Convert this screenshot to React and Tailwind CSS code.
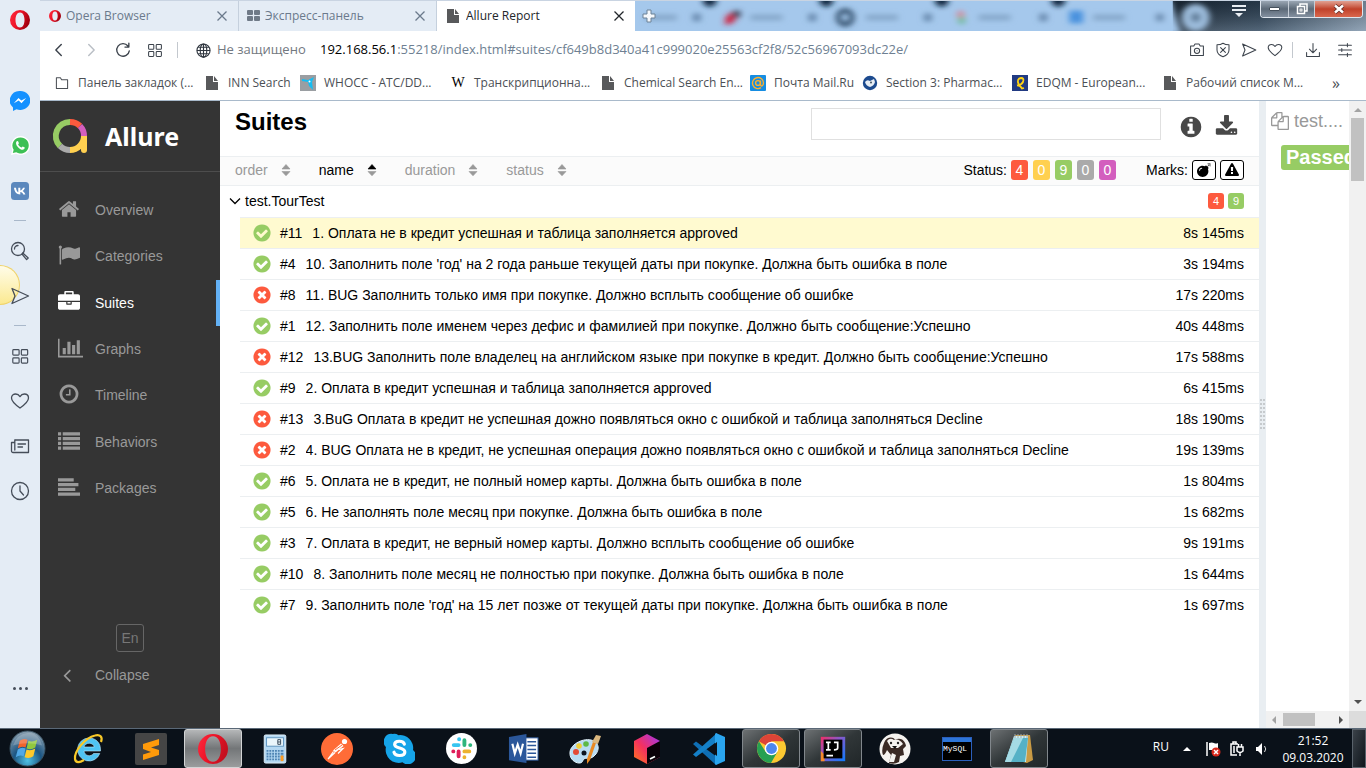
import { FaBomb } from "react-icons/fa";

const DISC = "q0 209-103 385.5t-279.5 279.5-385.5 103-385.5-103-279.5-279.5-103-385.5 103-385.5 279.5-279.5 385.5-103 385.5 103 279.5 279.5 103 385.5z";

const GLYPHS = {
  check: "M1412 734q0-28-18-46l-91-90q-19-19-45-19t-45 19l-408 407-226-226q-19-19-45-19t-45 19l-91 90q-18 18-18 46 0 27 18 45l362 362q19 19 45 19 27 0 46-19l543-543q18-18 18-45zm252 162" + DISC,
  times: "M1277 1122q0-26-19-45l-181-181 181-181q19-19 19-45 0-27-19-46l-90-90q-19-19-46-19-26 0-45 19l-181 181-181-181q-19-19-45-19-27 0-46 19l-90 90q-19 19-19 46 0 26 19 45l181 181-181 181q-19 19-19 45 0 27 19 46l90 90q19 19 46 19 26 0 45-19l181-181 181 181q19 19 45 19 27 0 46-19l90-90q19-19 19-46zm387-226" + DISC,
  info: "M1152 1376v-160q0-14-9-23t-23-9h-96v-512q0-14-9-23t-23-9h-320q-14 0-23 9t-9 23v160q0 14 9 23t23 9h96v320h-96q-14 0-23 9t-9 23v160q0 14 9 23t23 9h448q14 0 23-9t9-23zm-128-896v-160q0-14-9-23t-23-9h-192q-14 0-23 9t-9 23v160q0 14 9 23t23 9h192q14 0 23-9t9-23zm640 416" + DISC,
  home: "M1472 992v480q0 26-19 45t-45 19h-384v-384h-256v384h-384q-26 0-45-19t-19-45v-480q0-1 .5-3t.5-3l575-474 575 474q1 2 1 6zm223-69l-62 74q-8 9-21 11h-3q-13 0-21-7l-692-577-692 577q-12 8-24 7-13-2-21-11l-62-74q-8-10-7-23.5t11-21.5l719-599q32-26 76-26t76 26l244 204v-195q0-14 9-23t23-9h192q14 0 23 9t9 23v408l219 182q10 8 11 21.5t-7 23.5z",
  flag: "M320 256q0 72-64 110v1266q0 13-9.5 22.5t-22.5 9.5h-64q-13 0-22.5-9.5t-9.5-22.5v-1266q-64-38-64-110 0-53 37.5-90.5t90.5-37.5 90.5 37.5 37.5 90.5zm1472 64v763q0 25-12.5 38.5t-39.5 27.5q-215 116-369 116-61 0-123.5-22t-108.5-48-115.5-48-142.5-22q-192 0-464 146-17 9-33 9-26 0-45-19t-19-45v-742q0-32 31-55 21-14 79-43 236-120 421-120 107 0 200 29t219 88q38 19 88 19 54 0 117.5-21t110-47 88-47 54.5-21q26 0 45 19t19 45z",
  briefcase: "M640 256h512v-128h-512v128zm1152 640v480q0 66-47 113t-113 47h-1472q-66 0-113-47t-47-113v-480h672v160q0 26 19 45t45 19h320q26 0 45-19t19-45v-160h672zm-768 0v128h-256v-128h256zm768-480v384h-1792v-384q0-66 47-113t113-47h352v-160q0-40 28-68t68-28h576q40 0 68 28t28 68v160h352q66 0 113 47t47 113z",
  chart: "M640 896v512h-256v-512h256zm384-512v1024h-256v-1024h256zm1024 1152v128h-2048v-1536h128v1408h1920zm-640-896v768h-256v-768h256zm384-384v1152h-256v-1152h256z",
  clock: "M1024 544v448q0 14-9 23t-23 9h-320q-14 0-23-9t-9-23v-64q0-14 9-23t23-9h224v-352q0-14 9-23t23-9h64q14 0 23 9t9 23zm416 352q0-148-73-273t-198-198-273-73-273 73-198 198-73 273 73 273 198 198 273 73 273-73 198-198 73-273zm224 0" + DISC,
  list: "M0 192h256v256h-256zM0 576h256v256h-256zM0 960h256v256h-256zM0 1344h256v256h-256zM384 192h1408v256h-1408zM384 576h1408v256h-1408zM384 960h1408v256h-1408zM384 1344h1408v256h-1408z",
  align: "M0 192h1280v256h-1280zM0 576h1664v256h-1664zM0 960h1408v256h-1408zM0 1344h1792v256h-1792z",
  download: "M1344 1344q0-26-19-45t-45-19-45 19-19 45 19 45 45 19 45-19 19-45zm256 0q0-26-19-45t-45-19-45 19-19 45 19 45 45 19 45-19 19-45zm128-224v320q0 40-28 68t-68 28h-1472q-40 0-68-28t-28-68v-320q0-40 28-68t68-28h465l135 136q58 56 136 56t136-56l136-136h464q40 0 68 28t28 68zm-325-569q17 41-14 70l-448 448q-18 19-45 19t-45-19l-448-448q-31-29-14-70 17-39 59-39h256v-448q0-26 19-45t45-19h256q26 0 45 19t19 45v448h256q42 0 59 39z",
  left: "M1203 544q0 13-10 23l-393 393 393 393q10 10 10 23t-10 23l-50 50q-10 10-23 10t-23-10l-466-466q-10-10-10-23t10-23l466-466q10-10 23-10t23 10l50 50q10 10 10 23z",
  files: "M1696 384q40 0 68 28t28 68v1216q0 40-28 68t-68 28h-960q-40 0-68-28t-28-68v-288h-544q-40 0-68-28t-28-68v-672q0-40 20-88t48-76l408-408q28-28 76-48t88-20h416q40 0 68 28t28 68v328q68-40 128-40h416zm-544 213l-299 299h299v-299zm-640-384l-299 299h299v-299zm196 647l316-316v-416h-384v416q0 40-28 68t-68 28h-416v640h512v-256q0-40 20-88t48-76zm956 804v-1152h-384v416q0 40-28 68t-68 28h-416v640h896z",
  warning: "M1024 1375v-190q0-14-9.5-23.5t-22.5-9.5h-192q-13 0-22.5 9.5t-9.5 23.5v190q0 14 9.5 23.5t22.5 9.5h192q13 0 22.5-9.5t9.5-23.5zm-2-374l18-459q0-12-10-19-13-11-24-11h-220q-11 0-24 11-10 7-10 21l17 457q0 10 10 16.5t24 6.5h185q14 0 23.5-6.5t10.5-16.5zm-14-934l768 1408q35 63-2 126-17 29-46.5 46t-63.5 17h-1536q-34 0-63.5-17t-46.5-46q-37-63-2-126l768-1408q17-31 47-49t65-18 65 18 47 49z",
};

function Glyph({ name, className = "", wide = false }) {
  return (
    <svg viewBox={wide ? "0 0 2048 1792" : "0 0 1792 1792"} fill="currentColor" className={`shrink-0 ${className}`} aria-hidden="true">
      <path d={GLYPHS[name]} />
    </svg>
  );
}

function Line({ children, size = "size-5", w = 1.3 }) {
  return (
    <svg viewBox="0 0 20 20" fill="none" stroke="currentColor" strokeWidth={w} strokeLinejoin="round" strokeLinecap="round" className={`shrink-0 ${size}`} aria-hidden="true">
      {children}
    </svg>
  );
}

function OperaLogo({ id, className, bright = false }) {
  return (
    <svg viewBox="0 0 40 40" className={`shrink-0 ${className}`} aria-hidden="true">
      <defs>
        <linearGradient id={id} x1="0" y1="0" x2="1" y2="0.4">
          <stop offset="0" stopColor="#ff2b3f" />
          <stop offset="0.5" stopColor="#ee1428" />
          <stop offset="1" stopColor={bright ? "#c4101f" : "#a3000f"} />
        </linearGradient>
      </defs>
      <path
        fillRule="evenodd"
        fill={`url(#${id})`}
        d={bright
          ? "M20 0a20 20 0 1 0 0 40a20 20 0 1 0 0-40zM20 3c7 0 10.500 8 10.500 17s-3.500 17-10.500 17s-10.500-8-10.500-17s3.500-17 10.500-17z"
          : "M20 0a20 20 0 1 0 0 40a20 20 0 1 0 0-40zM20 5c6 0 9 7 9 15s-3 15-9 15s-9-7-9-15s3-15 9-15z"}
      />
    </svg>
  );
}

const FileIcon = () => (
  <svg viewBox="0 0 16 16" className="size-4 shrink-0" fill="#58595b" aria-hidden="true">
    <path d="M2 1h7v6h5v8H2zM10 1l4 5h-4z" />
  </svg>
);

const Cross = () => (
  <svg viewBox="0 0 12 12" className="size-3" stroke="currentColor" strokeWidth="1.300" aria-hidden="true">
    <path d="M1.500 1.500l9 9M10.500 1.500l-9 9" />
  </svg>
);

const HEART = "M10 17C5 13.500 1.500 10.500 1.500 7C1.500 4.500 3.500 3 5.700 3C7.500 3 9 4 10 5.600C11 4 12.500 3 14.300 3C16.500 3 18.500 4.500 18.500 7C18.500 10.500 15 13.500 10 17z";
const SEND = "M2 2.500L18.500 10L2 17.500L5 10z";

function OperaSidebar() {
  const item = "flex h-[45px] w-10 items-center justify-center";
  const dash = <div className="flex h-[15px] items-center"><div className="h-px w-3 bg-[#a9b8ca]" /></div>;
  return (
    <aside className="relative flex w-10 shrink-0 flex-col items-center bg-[#e4ecf5] text-[#454d59]">
      <div className="absolute top-[265px] left-0 h-10 w-5 rounded-r-full border border-l-0 border-[#f0d368] bg-linear-to-b from-[#fffce8] to-[#fbe98f]" />
      <button aria-label="Opera" className="mb-[38px] flex h-10 w-10 items-center justify-center"><OperaLogo id="op-a" className="size-5" /></button>
      <button aria-label="Messenger" className={item}>
        <svg viewBox="0 0 20 20" className="size-5"><path fill="#1591ff" d="M10 0a10 9.500 0 0 0-7 16.500V20l3.500-1.700A10 9.500 0 1 0 10 0z" /><path fill="#fff" d="M3.800 12.300L8.500 7l2.800 2.600L16.200 7l-4.700 5.200-2.800-2.600z" /></svg>
      </button>
      <button aria-label="WhatsApp" className={item}>
        <svg viewBox="0 0 20 20" className="size-[19px]"><path fill="#fff" d="M10 0a10 10 0 0 0-8.700 14.800L0 20l5.300-1.300A10 10 0 1 0 10 0z" /><path fill="#3dc055" d="M10 1.500a8.500 8.500 0 0 0-7.200 13L1.900 18l3.600-.9A8.500 8.500 0 1 0 10 1.500z" /><path fill="#fff" d="M7 5.300c.5 0 1.300 2 1.300 2.300 0 .4-.8 1.100-.8 1.300.2.600 2.300 2.900 3.500 3.200.3 0 1-1.100 1.300-1.100.4 0 2.300 1 2.300 1.200 0 1.300-1.300 2.200-2.400 2.200C9.500 14.400 5.300 10.500 5.300 7.500 5.300 6.300 6 5.300 7 5.300z" /></svg>
      </button>
      <button aria-label="VK" className={item}>
        <svg viewBox="0 0 18 18" className="size-[18px]"><rect width="18" height="18" rx="3.500" fill="#5b88bd" /><path fill="#fff" d="M9.300 12.500c-3.600 0-5.900-2.500-6.300-6.700h2c.2 2.500 1.300 4 2.300 4.400V5.800h2v2.700c1-.2 2.200-1.300 2.700-2.700h1.900c-.3 1.500-1.400 2.700-2.300 3.200.9.400 2.200 1.500 2.800 3.500h-2.100c-.5-1.300-1.600-2.300-3-2.400z" /></svg>
      </button>
      {dash}
      <button aria-label="Search" className={item}><Line><circle cx="8" cy="8" r="6.500" /><path d="M4.500 8A3.500 3.500 0 0 1 8 4.500M12.800 12l5.400 5-1.600 1.600-4.600-5.500z" /></Line></button>
      <button aria-label="My Flow" className={`relative ${item}`}><Line><path d={SEND} /></Line></button>
      {dash}
      <button aria-label="Speed Dial" className={item}><Line size="size-[18px]"><rect x="2" y="3" width="7" height="6" rx="1" /><rect x="11.500" y="3" width="7" height="6" rx="1" /><rect x="2" y="12" width="7" height="6" rx="1" /><rect x="11.500" y="12" width="7" height="6" rx="1" /></Line></button>
      <button aria-label="Bookmarks" className={item}><Line><path d={HEART} /></Line></button>
      <button aria-label="News" className={item}><Line><path d="M5 4h13.500v12.500H3a1.500 1.500 0 0 1-1.500-1.500V6.500H4M4.800 4v10M8 8h7.500M8 11h4.500" /></Line></button>
      <button aria-label="History" className={item}><Line><circle cx="10" cy="10" r="8.500" /><path d="M10 5v5l3.500 4" /></Line></button>
      <button aria-label="More" className="mt-auto mb-[30px] flex h-5 w-10 items-center justify-center gap-[3px]">
        <i className="size-[3px] rounded-full bg-[#454d59]" /><i className="size-[3px] rounded-full bg-[#454d59]" /><i className="size-[3px] rounded-full bg-[#454d59]" />
      </button>
    </aside>
  );
}

function Tab({ icon, label, active }) {
  return (
    <div className={`flex h-full w-[198px] shrink-0 items-center gap-[5px] pl-2 pr-[10px] ${active ? "bg-white text-[#22262b]" : "border-r border-[#c5d0dd] bg-[#e4ecf5] text-[#6b7a8c]"}`}>
      {icon}
      <a href="#tab" className="flex-1 truncate text-xs">{label}</a>
      <button aria-label="Close tab"><Cross /></button>
    </div>
  );
}

function AeroGlass() {
  return (
    <svg viewBox="0 0 734 31" preserveAspectRatio="none" className="absolute inset-0 h-full w-full" aria-hidden="true">
      <defs>
        <filter id="soft" x="-20%" y="-50%" width="140%" height="200%"><feGaussianBlur stdDeviation="3" /></filter>
        <linearGradient id="dark" x1="0" x2="1"><stop offset="0" stopColor="#1a2836" /><stop offset="0.45" stopColor="#2b3f52" /><stop offset="1" stopColor="#8093a6" /></linearGradient>
        <linearGradient id="shade" x1="0" x2="0" y1="0" y2="1"><stop offset="0" stopColor="#000" stopOpacity="0.150" /><stop offset="1" stopColor="#cde" stopOpacity="0.250" /></linearGradient>
      </defs>
      <rect width="734" height="31" fill="#a5c8ec" />
      <rect x="540" width="194" height="31" fill="url(#dark)" />
      <rect x="540" width="194" height="31" fill="url(#shade)" />
      <g filter="url(#soft)">
        <path d="M520 0h18q5 20 10 34h-28z" fill="#a5c8ec" />
        <circle cx="563" cy="17" r="14" fill="#9dbddd" /><circle cx="563" cy="17" r="5" fill="#5b7894" />
        {[75, 192, 308, 425].map((x) => <circle key={x} cx={x} cy="-1" r="7" fill="#10283f" />)}
        {[10, 116, 232, 345, 460].map((x) => <rect key={x} x={x} y="14" width="32" height="6" fill="#86a8ca" />)}
        {[62, 178, 294, 410, 527].map((x) => <rect key={x} x={x - 4} y="13" width="8" height="8" fill="#6789ad" />)}
        <path d="M90 24q0-13 11-12v8q-4 5-11 4z" fill="#cf2545" /><rect x="98" y="10" width="8" height="7" fill="#41465c" />
        <circle cx="211" cy="17" r="7" fill="none" stroke="#304e6b" strokeWidth="5" />
        <circle cx="327" cy="14" r="4" fill="#d58b9c" /><circle cx="328" cy="20" r="4" fill="#74bba0" />
        <rect x="436" y="10" width="14" height="13" fill="#4a92de" />
      </g>
    </svg>
  );
}

function TabBar() {
  return (
    <div className="flex h-[31px] shrink-0 border-t border-[#c9d4e2] bg-[#e4ecf5] pl-px">
      <Tab icon={<OperaLogo id="op-b" className="size-3" />} label="Opera Browser" />
      <Tab icon={<svg viewBox="0 0 13 12" className="h-3 w-[13px] shrink-0" fill="#6f7a87"><rect width="6" height="5" rx="1" /><rect x="7" width="6" height="5" rx="1" /><rect y="6" width="6" height="5" rx="1" /><rect x="7" y="6" width="6" height="5" rx="1" /></svg>} label="Экспресс-панель" />
      <Tab active icon={<FileIcon />} label="Allure Report" />
      <div className="relative flex min-w-0 flex-1 items-start justify-between overflow-hidden">
        <AeroGlass />
        <button aria-label="New tab" className="relative mt-2 ml-[7px]">
          <svg viewBox="0 0 14 14" className="size-[14px]"><path d="M5 1h4v4h4v4H9v4H5V9H1V5h4z" fill="#f5f8fb" stroke="#6d8297" /></svg>
        </button>
        <div className="relative flex items-start pr-[3px]">
          <button aria-label="Tab menu" className="mt-1 mr-[14px]">
            <svg viewBox="0 0 14 12" className="h-3 w-[14px]" fill="#e9eef3"><path d="M0 0h14v2H0zM0 4h14v2H0zM3 8h8l-4 4z" /></svg>
          </button>
          <div className="flex h-[17px] overflow-hidden rounded-b-[4px] border border-t-0 border-[#dfe6ee] text-white">
            <button aria-label="Minimize" className="flex w-7 items-center justify-center border-r border-[#c6ced7] bg-linear-to-b from-[#9aa6b3] via-[#5d6a78] to-[#8390a0]"><i className="h-1 w-[11px] rounded-[1px] border border-[#45505c] bg-white" /></button>
            <button aria-label="Restore" className="flex w-[26px] items-center justify-center border-r border-[#c6ced7] bg-linear-to-b from-[#9aa6b3] via-[#5d6a78] to-[#8390a0]">
              <svg viewBox="0 0 12 12" className="size-3" fill="none" stroke="#fff" strokeWidth="1.500"><path d="M4 3V1h7v7H9" /><rect x="1.500" y="3.500" width="7" height="7" /><rect x="4" y="6" width="2" height="2" strokeWidth="1" /></svg>
            </button>
            <button aria-label="Close" className="flex w-[47px] items-center justify-center bg-linear-to-b from-[#e0a091] via-[#c0412a] to-[#d9674d]">
              <svg viewBox="0 0 12 10" className="h-[10px] w-3"><path d="M2 1.500l8 7M10 1.500l-8 7" stroke="#5b2a25" strokeWidth="4" /><path d="M2 1.500l8 7M10 1.500l-8 7" stroke="#fff" strokeWidth="2.500" /></svg>
            </button>
          </div>
        </div>
      </div>
    </div>
  );
}

function AddressBar() {
  const nav = "flex h-8 w-8 items-center justify-center";
  const act = "flex h-8 w-[26px] items-center justify-center";
  return (
    <div className="flex h-[38px] shrink-0 items-center bg-white pl-[3px] pr-[5px] text-[#3c434c]">
      <button aria-label="Back" className={nav}><Line w={1.6} size="size-[18px]"><path d="M12.500 4L6.500 10l6 6" /></Line></button>
      <button aria-label="Forward" className={`${nav} text-[#b9bec5]`}><Line w={1.6} size="size-[18px]"><path d="M7.500 4l6 6-6 6" /></Line></button>
      <button aria-label="Reload" className={nav}><Line w={1.5} size="size-[18px]"><path d="M15.500 5.500A7 7 0 1 0 17 11M16.500 2.500v4.300h-4.300" /></Line></button>
      <button aria-label="Speed Dial" className={nav}><Line size="size-4"><rect x="2" y="3" width="6.500" height="6" rx="1" /><rect x="11.500" y="3" width="6.500" height="6" rx="1" /><rect x="2" y="12" width="6.500" height="6" rx="1" /><rect x="11.500" y="12" width="6.500" height="6" rx="1" /></Line></button>
      <div className="mx-[6px] h-4 w-px bg-[#c3c8ce]" />
      <div className="ml-3 flex w-[124px] shrink-0 items-center gap-[6px] text-[13px] text-[#72787f]">
        <svg viewBox="0 0 16 16" className="size-[15px] shrink-0" fill="none" stroke="#2f363f" strokeWidth="1.200"><circle cx="8" cy="8" r="7" /><ellipse cx="8" cy="8" rx="3.500" ry="7" /><path d="M1 8h14M8 1v14M2.300 4.500h11.400M2.300 11.500h11.400" /></svg>
        <span className="whitespace-nowrap">Не защищено</span>
      </div>
      <a href="#url" className="min-w-0 flex-1 truncate text-[13px] text-[#6e7f92]"><span className="text-black">192.168.56.1</span>:55218/index.html#suites/cf649b8d340a41c999020e25563cf2f8/52c56967093dc22e/</a>
      <button aria-label="Snapshot" className={act}><Line size="size-4"><path d="M2 5h4l1.500-2.500h5L14 5h4v12H2z" /><circle cx="10" cy="11" r="3.300" /><path d="M10 11h.1" /></Line></button>
      <button aria-label="Ad blocker" className={act}><Line size="size-4"><path d="M10 1.500C7 3.500 4.500 3.500 2.500 3.500V10c0 4.500 3.500 7 7.500 8.500 4-1.500 7.500-4 7.500-8.500V3.500c-2 0-4.500 0-7.500-2zM7 7l6 6M13 7l-6 6" /></Line></button>
      <button aria-label="Send" className={act}><Line size="size-4"><path d={SEND} /></Line></button>
      <button aria-label="Add bookmark" className={act}><Line size="size-4"><path d={HEART} /></Line></button>
      <div className="mx-1 h-4 w-px bg-[#c3c8ce]" />
      <button aria-label="Downloads" className={nav}><Line size="size-4"><path d="M10 2v11M5.500 9l4.500 4.500L14.500 9M2 13v5h16v-5" /></Line></button>
      <button aria-label="Easy setup" className={nav}><Line size="size-4"><path d="M2 4h16M2 10h16M2 16h16M13 2v4M6 8v4M13 14v4" /></Line></button>
    </div>
  );
}

const BOOKMARKS = [
  ["Панель закладок (...", "folder", "w-[150px]"],
  ["INN Search", "file", "w-[96px]"],
  ["WHOCC - ATC/DD...", "who", "w-[150px]"],
  ["Транскрипционна...", "wiki", "w-[150px]"],
  ["Chemical Search En...", "file", "w-[150px]"],
  ["Почта Mail.Ru", "mail", "w-[112px]"],
  ["Section 3: Pharmac...", "round", "w-[150px]"],
  ["EDQM - European...", "edqm", "w-[150px]"],
  ["Рабочий список М...", "file", "w-[150px]"],
];

const BOOKMARK_ICONS = {
  folder: <Line size="size-4"><path d="M3 3.500h5l1.500 2.500H17v11H3z" /></Line>,
  file: <FileIcon />,
  who: <svg viewBox="0 0 16 16" className="size-4 shrink-0"><rect width="16" height="16" fill="#9a9ea2" /><path d="M2 4l6 1 6-3-2 5 1 8-4-4-1-4-6-1z" fill="#16bdf2" /><circle cx="9.500" cy="6.500" r="1" fill="#fff" /></svg>,
  wiki: <span className="w-4 shrink-0 text-center font-['Liberation_Serif',serif] text-[14px] text-black">W</span>,
  mail: <svg viewBox="0 0 16 16" className="size-4 shrink-0"><rect width="16" height="16" rx="1" fill="#168de2" /><path d="M10.500 5.500v4c0 2.500 3 1.500 3-1.500a5.500 5.500 0 1 0-2.500 4.700" fill="none" stroke="#ffb02e" strokeWidth="1.400" /><circle cx="8" cy="8" r="2.400" fill="none" stroke="#ffb02e" strokeWidth="1.400" /></svg>,
  round: <svg viewBox="0 0 16 16" className="size-4 shrink-0"><circle cx="8" cy="8" r="7.200" fill="#1d4b8f" /><path d="M3 7q2-3 5-1l4-2 1 3q-1 4-5 5-4-1-5-5z" fill="#e8eef5" /><circle cx="9" cy="7.500" r="1" fill="#456" /></svg>,
  edqm: <svg viewBox="0 0 16 16" className="size-4 shrink-0"><rect width="16" height="16" fill="#213a82" /><path d="M6.500 9Q4.500 3.500 9 3q3.500 0 2 4-1.500 3-5 3M5 10.500q3-.5 5 3l2-.5" fill="none" stroke="#ffd313" strokeWidth="1.800" /></svg>,
};

function BookmarksBar() {
  return (
    <div className="flex h-[32px] shrink-0 items-center border-b border-[#a9bacb] bg-white pb-[3px] pl-[14px] pr-[26px] text-xs text-[#4b4f55]">
      {BOOKMARKS.map(([label, icon, width]) => (
        <a key={label} href="#bookmark" className={`flex shrink-0 items-center gap-2 ${width}`}>
          {BOOKMARK_ICONS[icon]}
          <span className="whitespace-nowrap">{label}</span>
        </a>
      ))}
      <button aria-label="More bookmarks" className="ml-auto text-base leading-6">»</button>
    </div>
  );
}

const NAV = [
  ["Overview", "home"],
  ["Categories", "flag"],
  ["Suites", "briefcase"],
  ["Graphs", "chart"],
  ["Timeline", "clock"],
  ["Behaviors", "list"],
  ["Packages", "align"],
];

function AllureNav() {
  return (
    <nav className="flex w-[180px] shrink-0 flex-col bg-[#343434] text-sm text-[#999]">
      <a href="#home" className="flex h-[71px] items-center gap-[17px] border-b border-[#4d4d4d] pl-3 text-white">
        <svg viewBox="0 0 36 36" className="size-9" fill="none" strokeWidth="6" aria-hidden="true">
          <path d="M8 28A14 14 0 0 1 18 4" stroke="#97cc64" />
          <path d="M18 4a14 14 0 0 1 10 4" stroke="#fd5a3e" />
          <path d="M28 8a14 14 0 0 1 4 10" stroke="#d35ebe" />
          <path d="M18 32A14 14 0 0 0 32 18V32" stroke="#ffd050" />
          <circle cx="32" cy="32" r="3" fill="#ffd050" />
          <path d="M18 32a14 14 0 0 1-10-4.200" stroke="#aaa" />
        </svg>
        <span className="font-['Noto_Sans',sans-serif] text-[25px] font-bold leading-8">Allure</span>
      </a>
      <ul className="mt-[15px] grid h-[324px] grid-rows-7">
        {NAV.map(([label, icon]) => (
          <li key={label} className={label === "Suites" ? "border-r-4 border-[#63b1f5] text-white" : ""}>
            <a href={`#${label}`} className="flex h-full items-center pl-[18px]">
              <span className="w-[37px] pb-0.5"><Glyph name={icon} wide={icon === "chart"} className={icon === "chart" ? "h-[22px] w-[25px]" : "size-[22px]"} /></span>
              {label}
            </a>
          </li>
        ))}
      </ul>
      <div className="mt-auto flex flex-col pb-[42px]">
        <button className="mb-3 size-7 self-center rounded-[3px] border border-[#666] text-[#777]">En</button>
        <button className="flex h-[22px] items-center pl-4 text-left"><span className="w-[39px]"><Glyph name="left" className="size-[22px]" /></span>Collapse</button>
      </div>
    </nav>
  );
}

const TESTS = [
  [11, "1. Оплата не в кредит успешная и таблица заполняется approved", "8s 145ms", true],
  [4, "10. Заполнить поле 'год' на 2 года раньше текущей даты при покупке. Должна быть ошибка в поле", "3s 194ms", true],
  [8, "11. BUG Заполнить только имя при покупке. Должно всплыть сообщение об ошибке", "17s 220ms", false],
  [1, "12. Заполнить поле именем через дефис и фамилией при покупке. Должно быть сообщение:Успешно", "40s 448ms", true],
  [12, "13.BUG Заполнить поле владелец на английском языке при покупке в кредит. Должно быть сообщение:Успешно", "17s 588ms", false],
  [9, "2. Оплата в кредит успешная и таблица заполняется approved", "6s 415ms", true],
  [13, "3.BuG Оплата в кредит не успешная дожно появляться окно с ошибкой и таблица заполняться Decline", "18s 190ms", false],
  [2, "4. BUG Оплата не в кредит, не успешная операция дожно появляться окно с ошибкой и таблица заполняться Decline", "19s 139ms", false],
  [6, "5. Оплата не в кредит, не полный номер карты. Должна быть ошибка в поле", "1s 804ms", true],
  [5, "6. Не заполнять поле месяц при покупке. Должна быть ошибка в поле", "1s 682ms", true],
  [3, "7. Оплата в кредит, не верный номер карты. Должно всплыть сообщение об ошибке", "9s 191ms", true],
  [10, "8. Заполнить поле месяц не полностью при покупке. Должна быть ошибка в поле", "1s 644ms", true],
  [7, "9. Заполнить поле 'год' на 15 лет позже от текущей даты при покупке. Должна быть ошибка в поле", "1s 697ms", true],
];

function Sorter({ label, active }) {
  return (
    <button className={`flex items-center gap-[13px] ${active ? "text-black" : "text-[#999]"}`}>
      {label}
      <svg viewBox="0 0 10 12" className="h-3 w-[10px]"><path d="M1 5l4-4.500L9 5z" fill={active ? "#000" : "#999"} stroke={active ? "#000" : "#999"} strokeWidth=".6" /><path d="M1 7.500h8L5 11.800z" fill="#999" stroke="#999" strokeWidth=".6" /></svg>
    </button>
  );
}

function Suites() {
  return (
    <main className="flex min-w-0 flex-1 flex-col bg-white text-sm text-black">
      <header className="flex h-[55px] shrink-0 items-start pt-[7px] pl-[15px] pr-[21px] text-[#484848]">
        <h1 className="flex-1 text-2xl leading-7 font-bold text-black">Suites</h1>
        <input aria-label="Search" className="h-8 w-[350px] border border-[#e0e0e0] bg-white px-2 outline-none" />
        <button aria-label="Information" className="mt-[7px] ml-[18px]"><Glyph name="info" className="size-6" /></button>
        <button aria-label="Download CSV" className="mt-[7px] ml-3"><Glyph name="download" className="size-[23px]" /></button>
      </header>
      <div className="flex h-[30px] shrink-0 items-center border-y border-[#eceff1] bg-[#fbfbfb] pr-[15px] pb-0.5 pl-[15px]">
        <div className="flex flex-1 gap-7">
          <Sorter label="order" /><Sorter label="name" active /><Sorter label="duration" /><Sorter label="status" />
        </div>
        <span className="mr-1">Status:</span>
        <div className="mr-[30px] flex gap-[5px] text-center leading-5 text-white">
          <button className="w-[17px] rounded-[3px] bg-[#fd5a3e]">4</button>
          <button className="w-[17px] rounded-[3px] bg-[#ffd050]">0</button>
          <button className="w-[17px] rounded-[3px] bg-[#97cc64]">9</button>
          <button className="w-[17px] rounded-[3px] bg-[#aaa]">0</button>
          <button className="w-[17px] rounded-[3px] bg-[#d35ebe]">0</button>
        </div>
        <span className="mr-1">Marks:</span>
        <div className="flex gap-1">
          <button aria-label="Flaky" className="flex h-5 w-6 items-center justify-center rounded-[3px] border border-black bg-white"><FaBomb className="size-[14px]" /></button>
          <button aria-label="New failed" className="flex h-5 w-6 items-center justify-center rounded-[3px] border border-black bg-white"><Glyph name="warning" className="size-[14px]" /></button>
        </div>
      </div>
      <button className="flex h-[31px] shrink-0 items-center pb-0.5 pl-[9px] pr-[15px]">
        <svg viewBox="0 0 12 8" className="mr-1 h-2 w-3" fill="none" stroke="#000" strokeWidth="1.300"><path d="M1 1.500l5 5 5-5" /></svg>
        <span className="flex-1 text-left">test.TourTest</span>
        <span className="flex gap-1 text-[11px] leading-4 text-white"><b className="w-4 rounded-[3px] bg-[#fd5a3e] text-center font-normal">4</b><b className="w-4 rounded-[3px] bg-[#97cc64] text-center font-normal">9</b></span>
      </button>
      <ul className="pl-5">
        {TESTS.map(([n, name, time, ok], i) => (
          <li key={n} className={`border-t border-[#eceff1] ${i === 0 ? "bg-[#fffad0]" : ""}`}>
            <a href={`#test-${n}`} className="flex h-[30px] items-center pr-[15px] pl-3">
              <Glyph name={ok ? "check" : "times"} className={`mr-2 size-5 ${ok ? "text-[#97cc64]" : "text-[#fd5a3e]"}`} />
              <span className="mr-[10px]">#{n}</span>
              <span className="min-w-0 flex-1 truncate">{name}</span>
              <span>{time}</span>
            </a>
          </li>
        ))}
      </ul>
    </main>
  );
}

function DetailPane() {
  return (
    <section className="flex w-[107px] shrink-0">
      <div className="flex w-[7px] items-center justify-center bg-[#e9eef2]">
        <svg viewBox="0 0 5 32" className="h-8 w-[5px]" fill="#c6cacd">
          {[0, 4, 8, 12, 16, 20, 24, 28].map((y) => <path key={y} d={`M0 ${y}h2v2H0zM3 ${y}h2v2H3z`} />)}
        </svg>
      </div>
      <div className="flex min-w-0 flex-1 flex-col bg-white">
        <div className="min-h-0 flex-1 overflow-hidden">
          <h2 className="mt-[8px] flex items-center gap-[5px] pl-[5px] pr-[4px] text-lg leading-6 text-[#999]"><Glyph name="files" className="size-[18px]" /><span className="whitespace-nowrap">test....</span></h2>
          <span className="mt-[12px] ml-[15px] block w-[84px] rounded-[3px] bg-[#97cc64] px-[5px] text-xl leading-[25px] font-bold text-white">Passed</span>
        </div>
        <div className="flex h-[17px] items-center bg-[#f1f1f1] pl-[6px] pr-[6px]">
          <svg viewBox="0 0 4 8" className="h-2 w-1" fill="#a3a3a3"><path d="M4 0v8L0 4z" /></svg>
          <div className="ml-[7px] h-[13px] w-8 bg-[#c1c1c1]" />
          <svg viewBox="0 0 4 8" className="ml-auto h-2 w-1" fill="#505050"><path d="M0 0v8l4-4z" /></svg>
        </div>
      </div>
      <div className="flex w-[17px] shrink-0 flex-col items-center bg-[#f1f1f1]">
        <svg viewBox="0 0 8 4" className="mt-[7px] h-1 w-2" fill="#a3a3a3"><path d="M0 4h8L4 0z" /></svg>
        <div className="mt-[6px] h-[63px] w-[13px] bg-[#c1c1c1]" />
        <svg viewBox="0 0 8 4" className="mt-auto mb-[7px] h-1 w-2" fill="#505050"><path d="M0 0h8L4 4z" /></svg>
        <div className="h-[17px] w-full bg-[#dcdcdc]" />
      </div>
    </section>
  );
}

const APPS = [
  ["Internet Explorer", "", (
    <svg viewBox="0 0 32 32" className="size-8"><path d="M16 5a11.500 11.500 0 1 0 10.800 15.500h-6.300c-2.500 4-9.200 2.300-9.500-2.500h16.500C28 10 23 5 16 5zM11 14c1-5 9.500-5 10.200 0z" fill="#4fc3f3" stroke="#bdeaff" strokeWidth=".6" /><path d="M28 9c2-5-1-8-6-6.500C12 5 1 18 2 26c.6 4.500 5 3.500 9 1" fill="none" stroke="#f9c928" strokeWidth="2.200" /></svg>
  )],
  ["Sublime Text", "", (
    <svg viewBox="0 0 32 32" className="size-8"><rect width="32" height="32" rx="2" fill="#454545" /><path d="M8 11l16-5v6l-8 2.500 8 2.500v5L8 27v-5.500l8-2.500-8-3z" fill="#ff9a0a" /></svg>
  )],
  ["Opera", "current", <OperaLogo id="op-c" bright className="size-[30px]" />],
  ["Calculator", "", (
    <svg viewBox="0 0 24 32" className="h-[30px] w-6"><rect x=".5" y="1" width="23" height="30" rx="1.500" fill="#b4d8f2" stroke="#e3f2fc" /><rect x="3" y="4" width="18" height="9" fill="#eaf6fb" stroke="#5c92bd" /><path d="M15 6h3v5h-3zM15 8.500h3" fill="none" stroke="#345" />{[17, 20, 23, 26].map((y) => <path key={y} d={`M3 ${y}h2v2H3zM6 ${y}h2v2H6zM9 ${y}h2v2H9zM12 ${y}h2v2h-2zM15 ${y}h2v2h-2zM18 ${y}h3v2h-3z`} fill="#4d83b3" />)}<path d="M18 23h3v6h-3z" fill="#ff9b20" /></svg>
  )],
  ["Postman", "", (
    <svg viewBox="0 0 32 32" className="size-8"><circle cx="16" cy="16" r="16" fill="#ff6c37" /><circle cx="23.500" cy="8.500" r="2.600" fill="#fff" /><path d="M20 10.500l2.500 2.500-8 6.500-2.500-2z" fill="#fff" /><path d="M12.500 18.500L7 26l7-6.500M18 16.500l4-1-5 5" fill="none" stroke="#fff" strokeWidth="1.200" /><path d="M14 17l7-5" stroke="#ff6c37" /></svg>
  )],
  ["Skype", "", (
    <svg viewBox="0 0 32 32" className="size-[31px]"><path d="M9 1a8 8 0 0 1 6 1.200A13.500 13.500 0 0 1 30 17.500a8 8 0 0 1-11 12.800A13.500 13.500 0 0 1 2 14.500 8 8 0 0 1 9 1z" fill="#16a4e8" /><path d="M21 11.500c-1-4-10-4-10 .3 0 4.500 10.500 2.700 10.500 7.700 0 4.800-10 5-11.200.3" fill="none" stroke="#fff" strokeWidth="3.300" strokeLinecap="round" /></svg>
  )],
  ["Slack", "", (
    <svg viewBox="0 0 32 32" className="size-[31px]" strokeWidth="4" strokeLinecap="round"><circle cx="16" cy="16" r="16" fill="#fff" /><path d="M8 12.500h5M13.500 6.500h.1" stroke="#36c5f0" /><path d="M19 7.500v5M25 12.500h.1" stroke="#2eb67d" /><path d="M19 19h5M19 25v.1" stroke="#ecb22e" /><path d="M13 19v5M7.500 19h.1" stroke="#e01e5a" /></svg>
  )],
  ["Word", "", (
    <svg viewBox="0 0 32 32" className="size-[31px]"><rect x="16" y="5" width="15" height="23" fill="#fff" stroke="#2b579a" /><path d="M20 9h9M20 13h9M20 17h9M20 21h9M20 25h9" stroke="#2b579a" strokeWidth="1.500" /><path d="M1 4l18-3v30L1 28z" fill="#2b579a" /><path d="M4.500 11l2.500 10 3-9 3 9 2.500-10" fill="none" stroke="#fff" strokeWidth="2.200" /></svg>
  )],
  ["Paint", "", (
    <svg viewBox="0 0 32 32" className="size-8"><path d="M1 21C0 12 13 5 22 7c9 2 9 11 3 16-4 4-8 1-10 3s-1 4-5 4S1 26 1 21z" fill="#b9dcf2" stroke="#e5f4fc" /><circle cx="7" cy="19" r="3" fill="#e44a35" /><circle cx="10" cy="13" r="2.800" fill="#f2cf36" /><circle cx="17" cy="11" r="2.800" fill="#5cb946" /><circle cx="15" cy="20" r="2.500" fill="#0c1520" /><path d="M27 10l-6 17-3 4V26l6-17z" fill="#e98a24" /><path d="M23 9l4-7 5 1-3 8z" fill="#dab77e" /></svg>
  )],
  ["JetBrains Toolbox", "", (
    <svg viewBox="0 0 30 32" className="h-8 w-[30px]"><defs><linearGradient id="jb" x1="0" y1="1" x2="1" y2="0"><stop offset="0" stopColor="#ff7a1a" /><stop offset=".45" stopColor="#f5315f" /><stop offset="1" stopColor="#9d35f5" /></linearGradient></defs><path d="M15 1l13 7v16l-13 7L2 24V8z" fill="url(#jb)" /><path d="M15 15l13-7v16l-13 7z" fill="#0a0008" /><path d="M18 26l5-2.500" stroke="#fff" strokeWidth="1.800" /></svg>
  )],
  ["Visual Studio Code", "", (
    <svg viewBox="0 0 32 32" className="size-8"><path d="M0 11l3-2.500L24 24v7L23 32z" fill="#0f6fb5" /><path d="M0 21.500l3 2.500L24 8.500V0z" fill="#1480c8" /><path d="M23 0l9 4v24l-9 4-1-1V1z" fill="#2aa5ef" /><path d="M24 9v14l-9-7z" fill="#0b1119" /></svg>
  )],
  ["Chrome", "open", (
    <svg viewBox="0 0 32 32" className="size-[31px]"><circle cx="16" cy="16" r="15" fill="#fbc831" /><path d="M16 16L3 8.500A15 15 0 0 1 29 8.500H16z" fill="#dd4437" /><path d="M3 8.500A15 15 0 0 0 15.500 31L22 19.500 16 16l-6 3.500z" fill="#27a052" /><circle cx="16" cy="16" r="7" fill="#fff" /><circle cx="16" cy="16" r="5.600" fill="#4d87ee" /></svg>
  )],
  ["IntelliJ IDEA", "open", (
    <svg viewBox="0 0 32 32" className="size-[30px]"><defs><linearGradient id="ij" x1="0" y1="0" x2="1" y2="1"><stop offset="0" stopColor="#f52c62" /><stop offset=".4" stopColor="#8a58c9" /><stop offset="1" stopColor="#0b7cff" /></linearGradient></defs><path d="M3 3h26v26H3z" fill="url(#ij)" /><path d="M3 18l4 4v7H3z" fill="#f78a2c" /><rect x="6" y="6" width="20" height="20" fill="#000" /><path d="M8.500 9h5M11 9v8M8.500 17h5M17 9h4v6q0 2-4 2M9 23h7" fill="none" stroke="#fff" strokeWidth="1.800" /></svg>
  )],
  ["DBeaver", "", (
    <svg viewBox="0 0 32 32" className="size-8"><circle cx="16" cy="16" r="15.500" fill="#f5f3ef" /><path d="M5 10c2-6 9-7 11-3 5-3 10 0 11 6l-3 3 1 6-4 1-1 6q-5 3-10 1l2-8-4-5q-2 5-4 5-2-5 1-12z" fill="#3a2a24" /><path d="M8 8q3-4 7-1 5-2 9 4l-5 4h-7z" fill="#f5f3ef" /><circle cx="12" cy="10" r="1.200" fill="#222" /><circle cx="19" cy="10" r="1.200" fill="#222" /><path d="M13 13h5l-2 3z" fill="#111" /><path d="M13 20l4 2-2 7h-5z" fill="#f5f3ef" /></svg>
  )],
  ["MySQL", "", (
    <span className="flex h-6 w-[30px] flex-col border border-[#2b5fbc] bg-black text-left"><span className="h-1 bg-[#2d75d8]" /><span className="font-['Liberation_Mono',monospace] text-[8px] leading-[14px] whitespace-nowrap text-white">MySQL</span></span>
  )],
  ["Notepad", "open", (
    <svg viewBox="0 0 32 32" className="size-8"><path d="M12 2h15l3 25-6 3-4-1z" fill="#c99b45" /><path d="M11 3h14l-2 26H2z" fill="#cdeff5" /><path d="M11 5h14l-3 24H2z" fill="#55b1c6" /><path d="M11 5h9L8 29H2z" fill="#a5dbe5" /><path d="M12 1v4M15 1v4M18 1v4M21 1v4M24 1v4" stroke="#9fa8aa" /></svg>
  )],
];

const APP_STYLE = {
  "": "border-transparent",
  open: "border-[#81878c] bg-linear-to-br from-[#6d7173] via-[#303638] to-[#202628]",
  current: "border-[#d2d4d5] bg-linear-to-b from-[#b5b7b8] via-[#737678] to-[#9a9c9d]",
};

function Taskbar() {
  return (
    <footer className="flex h-10 shrink-0 items-stretch border-t border-[#5a6877] bg-[#0a1119] font-['Open_Sans',sans-serif] text-xs text-white">
      <button aria-label="Start" className="mr-[6px] flex w-[54px] items-center justify-center">
        <svg viewBox="0 0 38 38" className="size-[37px]"><defs><radialGradient id="orb" cx=".5" cy=".85" r=".8"><stop offset="0" stopColor="#4fc0e4" /><stop offset=".5" stopColor="#1c5683" /><stop offset="1" stopColor="#8199ab" /></radialGradient></defs><circle cx="19" cy="19" r="18" fill="url(#orb)" stroke="#3b5262" /><path d="M11 11q4-3 8-1l-2 8q-4-2-8 1z" fill="#f0642d" /><path d="M20 11q4 2 9-1l-2 8q-4 3-9 1z" fill="#91c83e" /><path d="M9 20q4-3 8-1l-2 8q-4-2-8 1z" fill="#50a8e6" /><path d="M18 20q4 2 9-1l-2 8q-4 3-9 1z" fill="#fdc92b" /><path d="M4 16Q8 4 19 3t15 13q-15-5-30 0z" fill="#fff" opacity=".2" /></svg>
      </button>
      <div className="flex flex-1 gap-1">
        {APPS.map(([name, state, icon]) => (
          <button key={name} aria-label={name} className={`flex w-[58px] items-center justify-center rounded-[3px] border ${APP_STYLE[state]}`}>{icon}</button>
        ))}
      </div>
      <div className="flex items-center">
        <button className="mr-[14px] pb-1">RU</button>
        <button aria-label="Hidden icons" className="mr-[14px]"><svg viewBox="0 0 8 4" className="h-1 w-2" fill="#fff"><path d="M0 4h8L4 0z" /></svg></button>
        <button aria-label="Action Center" className="mr-2"><svg viewBox="0 0 16 16" className="size-4"><path d="M2 1v14" stroke="#fff" strokeWidth="1.500" /><path d="M4 2q3-1 5 0t4 0v7H4z" fill="#fff" /><circle cx="11" cy="11" r="4.500" fill="#d9291c" /><path d="M9 9l4 4M13 9l-4 4" stroke="#fff" strokeWidth="1.500" /></svg></button>
        <button aria-label="Power" className="mr-[10px]"><svg viewBox="0 0 16 16" className="size-4" fill="none" stroke="#fff" strokeWidth="1.500"><path d="M8 14H2V3h7M4 3V1h3v2M5 5v7" /><path d="M8 6h6v4q-3 3-6 0zM9.500 6V3M12.500 6V3M11 11v4" /></svg></button>
        <button aria-label="Volume" className="mr-4"><svg viewBox="0 0 14 14" className="size-[14px]" fill="#fff"><path d="M1 5h2l4-4v12L3 9H1z" /><path d="M9.500 4q2.500 3 0 6" fill="none" stroke="#ddd" /></svg></button>
        <div className="mr-[11px] w-14 text-center leading-[17px]"><div>21:52</div><div className="-mx-2 whitespace-nowrap">09.03.2020</div></div>
      </div>
      <button aria-label="Show desktop" className="w-[14px] border border-[#59626b] bg-linear-to-br from-[#3b4249] to-[#10161c]" />
    </footer>
  );
}

export default function App() {
  return (
    <div className="flex h-screen min-h-[640px] flex-col overflow-hidden bg-white font-['Liberation_Sans',Arial,sans-serif]">
      <div className="flex min-h-0 flex-1">
        <OperaSidebar />
        <div className="flex min-w-0 flex-1 flex-col">
          <div className="flex flex-col font-['Open_Sans',sans-serif]">
            <TabBar />
            <AddressBar />
            <BookmarksBar />
          </div>
          <div className="flex min-h-0 flex-1">
            <AllureNav />
            <Suites />
            <DetailPane />
          </div>
        </div>
      </div>
      <Taskbar />
    </div>
  );
}
